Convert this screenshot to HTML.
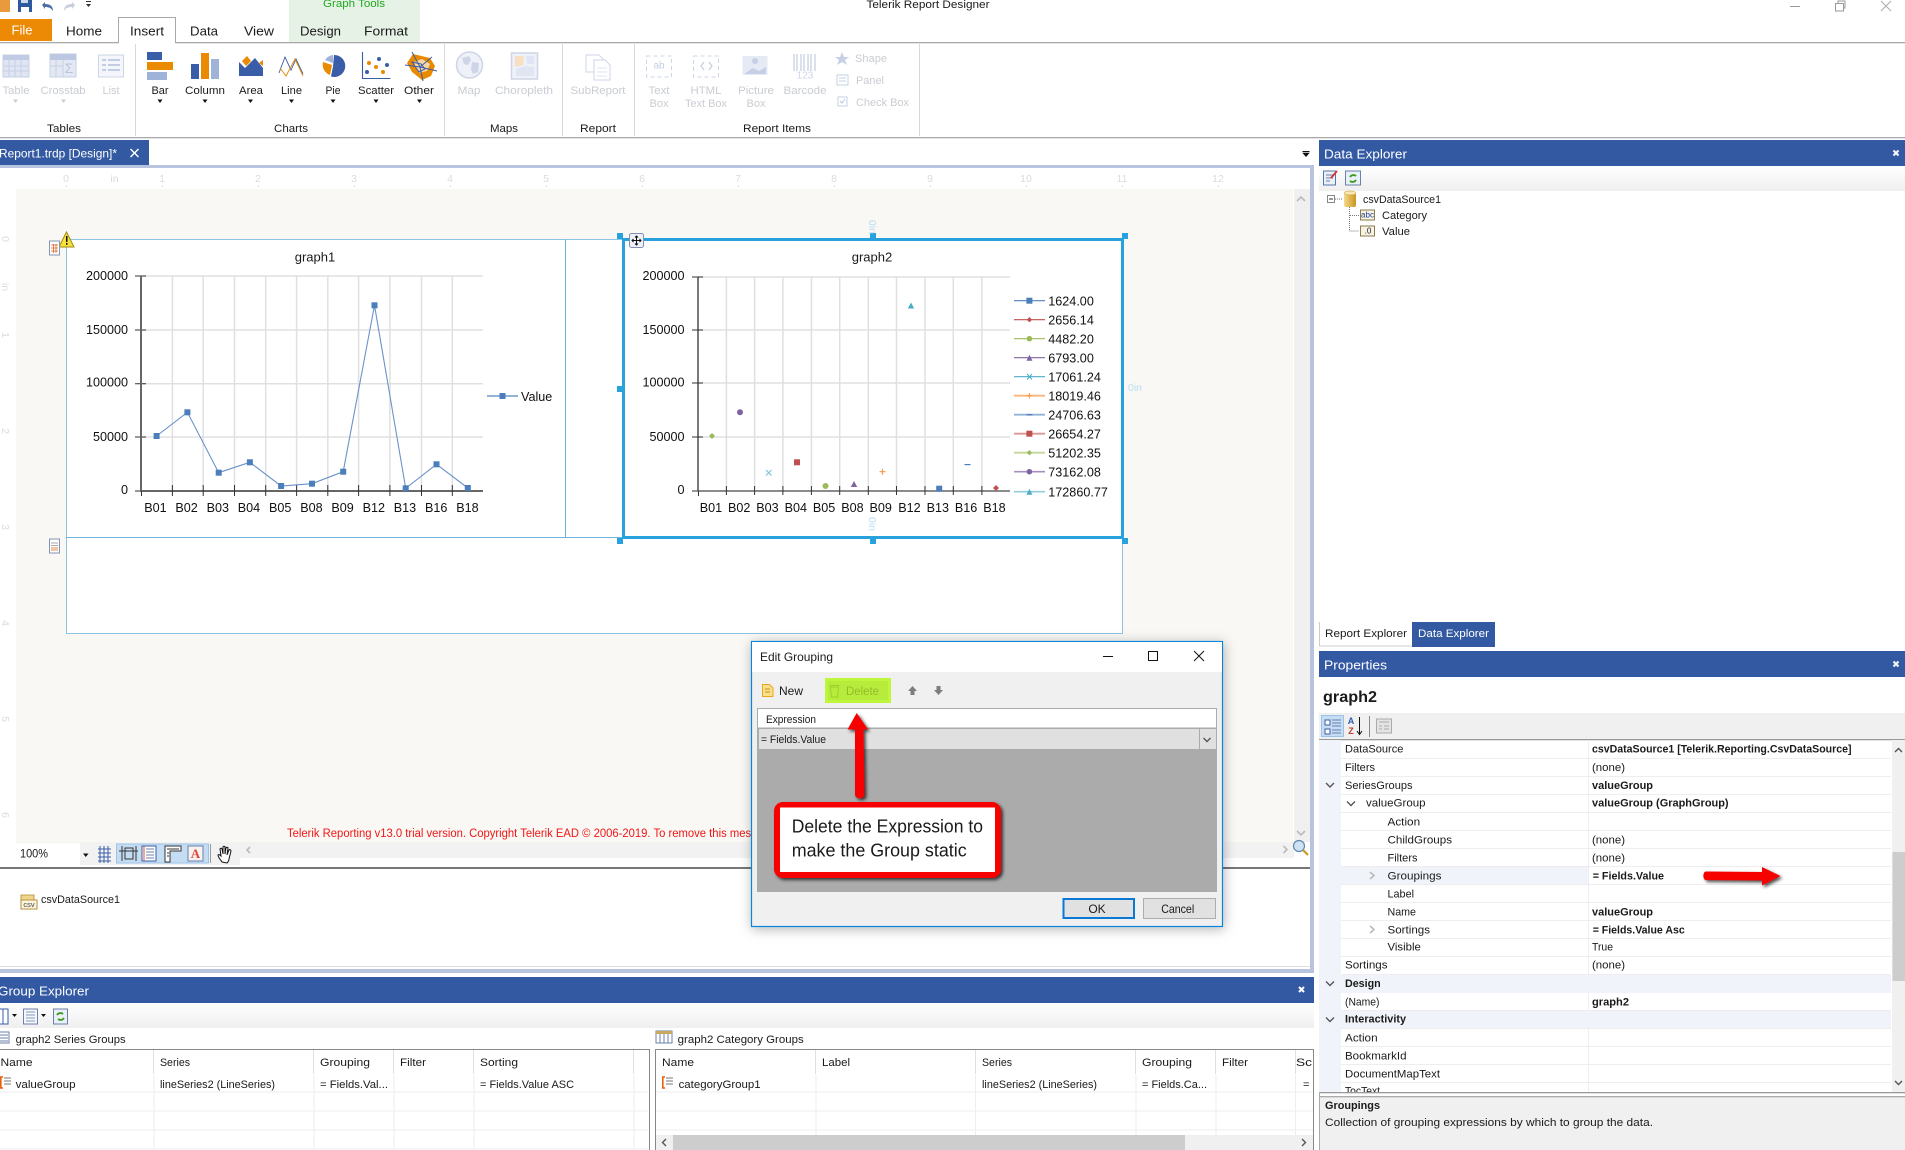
<!DOCTYPE html>
<html><head><meta charset="utf-8"><title>Telerik Report Designer</title>
<style>
html,body{margin:0;padding:0;background:#fff;width:1905px;height:1150px;overflow:hidden}
svg{display:block;position:absolute;left:0;top:0}
text{font-family:"Liberation Sans",Arial,sans-serif;font-size:11px;fill:#1a1a1a;dominant-baseline:central;transform:translateY(.9px)}
.n,.c.e{transform:none}
.g{fill:#c9ccd2}.m{text-anchor:middle}.b{font-weight:bold}.w{fill:#fff}
.r{fill:#dcdcd6;font-size:10.5px}
.c{font-size:12.6px;fill:#111}.e{text-anchor:end}
.gl{stroke:#e0e0e0;stroke-width:1.5;fill:none}
.ax{stroke:#666;stroke-width:2;fill:none}.tk{stroke:#333;stroke-width:1;fill:none}
.pl{stroke:#eee;stroke-width:1}
.chev{fill:none;stroke:#555;stroke-width:1.4}
.chg{fill:none;stroke:#bbb;stroke-width:1.6}
.gico{fill:none;stroke:#cdd5e6;stroke-width:1.2}
</style></head><body>
<svg width="1905" height="1150" viewBox="0 0 1905 1150" xmlns="http://www.w3.org/2000/svg">
<defs>
<filter id="ds" x="-10%" y="-10%" width="120%" height="120%"><feDropShadow dx="1" dy="2" stdDeviation="6" flood-color="#000" flood-opacity=".3"/></filter>
<filter id="ds2" x="-20%" y="-20%" width="140%" height="140%"><feDropShadow dx="2" dy="2" stdDeviation="1.5" flood-color="#000" flood-opacity=".7"/></filter>
<linearGradient id="tb" x1="0" y1="0" x2="0" y2="1"><stop offset="0" stop-color="#fff"/><stop offset="1" stop-color="#efefef"/></linearGradient>
<linearGradient id="cy" x1="0" y1="0" x2="1" y2="0"><stop offset="0" stop-color="#f7d98c"/><stop offset="1" stop-color="#c99422"/></linearGradient>
</defs>
<rect width="1905" height="1150" fill="#fff"/>

<!-- title bar -->
<rect x="0" y="0" width="10" height="12" fill="#e89a3c"/>
<path d="M18 0h14v12h-14z" fill="#2d5a9e"/><rect x="21" y="7" width="8" height="5" fill="#fff"/><rect x="21" y="0" width="7" height="3" fill="#cfd8ea"/>
<path d="M42 5l3-3v2c5 0 8 2 8 7-2-3-4-4-8-4v2z" fill="#4a6ea8"/>
<path d="M75 5l-3-3v2c-5 0-8 2-8 7 2-3 4-4 8-4v2z" fill="#c8d0de"/>
<rect x="86" y="1" width="5" height="1" fill="#333"/><path d="M86 4h5l-2.500 3z" fill="#333"/>
<text x="928" y="4" class="m" textLength="123" lengthAdjust="spacingAndGlyphs" font-size="11.500">Telerik Report Designer</text>
<rect x="1790" y="6" width="10" height="1" fill="#999"/>
<path d="M1835.500 3.500h8v7.500h-8zM1838 3.500v-2.500h7v7h-2" fill="none" stroke="#999"/>
<path d="M1881 1l10 10M1891 1l-10 10" stroke="#aaa" fill="none"/>

<!-- tabs -->
<rect x="289" y="0" width="131" height="43" fill="#e6f2e6"/>
<text x="354" y="3" class="m" style="fill:#1fa81f" textLength="62" lengthAdjust="spacingAndGlyphs">Graph Tools</text>
<rect x="0" y="42" width="1905" height="1.300" fill="#a9a9a9"/>
<rect x="0" y="19" width="52" height="22" fill="#ec8a06"/>
<text x="22" y="29" class="m w" style="font-size:13px">File</text>
<path d="M118.500 43V17.500h57V43" fill="#fff" stroke="#a9a9a9"/><rect x="119" y="41" width="56" height="3" fill="#fff"/>
<g style="font-size:13px">
<text x="66" y="31" class="n" textLength="36" lengthAdjust="spacingAndGlyphs" style="font-size:13px">Home</text>
<text x="130" y="31" class="n" textLength="34" lengthAdjust="spacingAndGlyphs" style="font-size:13px">Insert</text>
<text x="190" y="31" class="n" textLength="28" lengthAdjust="spacingAndGlyphs" style="font-size:13px">Data</text>
<text x="244" y="31" class="n" textLength="30" lengthAdjust="spacingAndGlyphs" style="font-size:13px">View</text>
<text x="300" y="31" class="n" textLength="41" lengthAdjust="spacingAndGlyphs" style="font-size:13px">Design</text>
<text x="364" y="31" class="n" textLength="44" lengthAdjust="spacingAndGlyphs" style="font-size:13px">Format</text>
</g>

<!-- ribbon -->
<rect x="0" y="137" width="1905" height="1.300" fill="#a9a9a9"/>
<g fill="#d8d8d8"><rect x="135" y="44" width="1" height="92"/><rect x="444" y="44" width="1" height="92"/><rect x="562" y="44" width="1" height="92"/><rect x="634" y="44" width="1" height="92"/><rect x="919" y="44" width="1" height="92"/></g>
<text x="64" y="128" class="m" textLength="34" lengthAdjust="spacingAndGlyphs">Tables</text>
<text x="291" y="128" class="m" textLength="34" lengthAdjust="spacingAndGlyphs">Charts</text>
<text x="504" y="128" class="m" textLength="28" lengthAdjust="spacingAndGlyphs">Maps</text>
<text x="598" y="128" class="m" textLength="36" lengthAdjust="spacingAndGlyphs">Report</text>
<text x="777" y="128" class="m" textLength="68" lengthAdjust="spacingAndGlyphs">Report Items</text>

<g class="ri">
<text x="16" y="90" class="m g" textLength="27" lengthAdjust="spacingAndGlyphs">Table</text>
<text x="63" y="90" class="m g" textLength="45" lengthAdjust="spacingAndGlyphs">Crosstab</text>
<text x="111" y="90" class="m g" textLength="17" lengthAdjust="spacingAndGlyphs">List</text>
<text x="160" y="90" class="m" textLength="17" lengthAdjust="spacingAndGlyphs">Bar</text>
<text x="205" y="90" class="m" textLength="40" lengthAdjust="spacingAndGlyphs">Column</text>
<text x="251" y="90" class="m" textLength="24" lengthAdjust="spacingAndGlyphs">Area</text>
<text x="291.500" y="90" class="m" textLength="21" lengthAdjust="spacingAndGlyphs">Line</text>
<text x="333" y="90" class="m" textLength="15" lengthAdjust="spacingAndGlyphs">Pie</text>
<text x="376" y="90" class="m" textLength="36" lengthAdjust="spacingAndGlyphs">Scatter</text>
<text x="419" y="90" class="m" textLength="30" lengthAdjust="spacingAndGlyphs">Other</text>
<text x="469" y="90" class="m g" textLength="23" lengthAdjust="spacingAndGlyphs">Map</text>
<text x="524" y="90" class="m g" textLength="58" lengthAdjust="spacingAndGlyphs">Choropleth</text>
<text x="598" y="90" class="m g" textLength="55" lengthAdjust="spacingAndGlyphs">SubReport</text>
<text x="659" y="90" class="m g" textLength="21" lengthAdjust="spacingAndGlyphs">Text</text>
<text x="659" y="103" class="m g" textLength="19" lengthAdjust="spacingAndGlyphs">Box</text>
<text x="706" y="90" class="m g" textLength="31" lengthAdjust="spacingAndGlyphs">HTML</text>
<text x="706" y="103" class="m g" textLength="42" lengthAdjust="spacingAndGlyphs">Text Box</text>
<text x="756" y="90" class="m g" textLength="36" lengthAdjust="spacingAndGlyphs">Picture</text>
<text x="756" y="103" class="m g" textLength="19" lengthAdjust="spacingAndGlyphs">Box</text>
<text x="805" y="90" class="m g" textLength="43" lengthAdjust="spacingAndGlyphs">Barcode</text>
<text x="855" y="58" class="g" textLength="32" lengthAdjust="spacingAndGlyphs">Shape</text>
<text x="856" y="80" class="g" textLength="28" lengthAdjust="spacingAndGlyphs">Panel</text>
<text x="856" y="102" class="g" textLength="53" lengthAdjust="spacingAndGlyphs">Check Box</text>
</g>
<g fill="#111"><path d="M157.500 99.500h5l-2.500 3.500z"/><path d="M202.500 99.500h5l-2.500 3.500z"/><path d="M248 99.500h5l-2.500 3.500z"/><path d="M289 99.500h5l-2.500 3.500z"/><path d="M330.500 99.500h5l-2.500 3.500z"/><path d="M373.500 99.500h5l-2.500 3.500z"/><path d="M417 99.500h5l-2.500 3.500z"/></g>
<g fill="#ccc"><path d="M13 99.500h5l-2.500 3.500z"/><path d="M61 99.500h5l-2.500 3.500z"/></g>

<!-- disabled table icons -->
<g>
<rect x="3" y="55" width="26" height="22" fill="#dfe5f2" stroke="#c6d0e6"/><rect x="3" y="55" width="26" height="5" fill="#c0cce4"/>
<path d="M3 66h26M3 71h26M9 60v17M15 60v17M21 60v17" stroke="#c6d0e6" fill="none"/>
<rect x="50" y="54" width="26" height="23" fill="#e4e8f3" stroke="#c6d0e6"/><rect x="50" y="54" width="26" height="6" fill="#bcc8e2"/><path d="M50 66h13M56 60v17M63 60v17" stroke="#c6d0e6" fill="none"/>
<text x="69" y="68" class="m n" style="fill:#b9c5df;font-size:14px">Σ</text>
<rect x="98.500" y="55" width="25" height="22" fill="#f4f6fb" stroke="#cdd5e6"/><path d="M102 60h4M102 65h4M102 70h4M108 60h12M108 65h12M108 70h12" stroke="#c2cde4" stroke-width="2"/>
</g>

<!-- chart icons -->
<rect x="147" y="52" width="15" height="8" fill="#3a5da8"/><rect x="147" y="62" width="26" height="8" fill="#ea8a00"/><rect x="147" y="72" width="20" height="8" fill="#9fb2d8"/>
<rect x="191" y="64" width="8" height="15" fill="#3a5da8"/><rect x="201" y="53" width="8" height="26" fill="#ea8a00"/><rect x="211" y="59" width="8" height="20" fill="#9fb2d8"/>
<path d="M242 61l5-5 4 5-5 5z" fill="#ea8a00"/><path d="M259 63l4-3v6z" fill="#ea8a00"/>
<path d="M239 76V62l6 6 10-10 8 10v8z" fill="#3a5da8"/>
<path d="M279 73l6-16 6 13 5-11 7 15" fill="none" stroke="#3a5da8" stroke-width=".9"/>
<path d="M280 68l6 8 9-17 8 17" fill="none" stroke="#ea8a00" stroke-width=".9"/>
<path d="M334 55a11 11 0 1 1 -3 21.500l2-10z" fill="#3a5da8"/>
<path d="M332 65l-9 -3a11 11 0 0 0 7 13z" fill="#ea8a00"/>
<path d="M333 55v8l-8-3a11 11 0 0 1 8-5z" fill="#9fb2d8"/>
<path d="M362.500 52v26.500h28" fill="none" stroke="#3a5da8" stroke-width="1.100"/>
<g fill="#ea8a00"><circle cx="369" cy="63" r="2"/><circle cx="376" cy="67" r="2"/><circle cx="383" cy="72" r="2"/></g><g fill="#3a5da8"><circle cx="379" cy="59" r="2"/><circle cx="387" cy="65" r="2"/><circle cx="367" cy="72" r="2"/></g>
<path d="M413 54l17 4 5 8-4 10-9 4-10-8-5-9z" fill="#ea8a00"/><path d="M414 62l8-3 8 5-3 7-8 2-3-5z" fill="#f6d8a6"/>
<path d="M412 52l8 15M420 67l12-10M420 67l17 4M420 67l3 14M420 67l-15-2" stroke="#3a5da8" fill="none" stroke-width="1"/><path d="M412 62l9 2 4 5-6 3z" fill="none" stroke="#3a5da8"/>

<!-- map & others (disabled) -->
<circle cx="469.500" cy="65" r="13" fill="#eef1f8" stroke="#cdd5e6" stroke-width="1.500"/><path d="M462 58l7-2 2 4-3 5-4-1zM472 62l7 1-1 9-5 2-2-5z" fill="#cdd5e6"/>
<rect x="511.500" y="53" width="26" height="26" fill="#eef1f8" stroke="#cdd5e6" stroke-width="1.500"/><path d="M515 56h9l-1 9-8 2z" fill="#f8dfc0"/><path d="M526 56h8v8h-7zM516 69l9-3 9 1v9h-18z" fill="#dfe5f2"/>
<path d="M586 55h13l6 6v11h-19z" fill="#fff" stroke="#cdd5e6"/><path d="M594 60h11l5 5v15h-16z" fill="#fff" stroke="#cdd5e6"/><path d="M597 68h10M597 72h10M597 76h10" stroke="#dde3ef"/>
<rect x="646.500" y="56" width="25" height="21" fill="none" stroke="#cdd5e6" stroke-dasharray="4 3"/><text x="659" y="66" class="m n" style="fill:#c3cde3;font-size:10px">ab</text>
<rect x="693.500" y="56" width="25" height="21" fill="none" stroke="#cdd5e6" stroke-dasharray="4 3"/><path d="M704 62l-3 4 3 4M709 62l3 4-3 4" fill="none" stroke="#c3cde3" stroke-width="1.200"/>
<rect x="742.500" y="56" width="25" height="19" fill="#e5eaf5"/><circle cx="755" cy="61" r="3" fill="#c5d0e6"/><path d="M744 74l9-6 6 3 7-4v7z" fill="#c5d0e6"/>
<path d="M794 54v17M797 54v17M801 54v17M804 54v17M808 54v17M811 54v17M815 54v17" stroke="#cdd5e6" stroke-width="1.500"/><text x="805" y="76" class="m n" style="fill:#cdd5e6;font-size:10px">123</text>
<path d="M842 52l2 5h5l-4 3 2 5-5-3-5 3 2-5-4-3h5z" fill="#c6d0e6"/>
<rect x="837" y="75" width="11" height="10" fill="#fff" stroke="#c6d0e6"/><path d="M839 78h7M839 81h7" stroke="#c6d0e6"/>
<rect x="838" y="97" width="9" height="9" fill="#fff" stroke="#c6d0e6"/><path d="M840 101l2 2 3-4" stroke="#b7c4df" fill="none"/>

<!-- doc tab -->
<rect x="0" y="140" width="149" height="25" fill="#3359a3"/>
<text x="-1" y="152.500" class="w" textLength="118" lengthAdjust="spacingAndGlyphs" style="font-size:12px">Report1.trdp [Design]*</text>
<path d="M130.500 149l8 8M138.500 149l-8 8" stroke="#fff" stroke-width="1.400"/>
<rect x="0" y="165" width="1314" height="3" fill="#b8c4de"/>
<rect x="1310" y="165" width="4" height="807" fill="#b8c4de"/>
<rect x="1302.500" y="151" width="7" height="1.300" fill="#111"/><path d="M1302.500 153h7l-3.500 4z" fill="#111"/>

<!-- rulers -->
<text x="66" y="178" class="r m">0</text><text x="114.500" y="178" class="r m">in</text>
<text x="162" y="178" class="r m">1</text><text x="258" y="178" class="r m">2</text><text x="354" y="178" class="r m">3</text><text x="450" y="178" class="r m">4</text><text x="546" y="178" class="r m">5</text><text x="642" y="178" class="r m">6</text><text x="738" y="178" class="r m">7</text><text x="834" y="178" class="r m">8</text><text x="930" y="178" class="r m">9</text><text x="1026" y="178" class="r m">10</text><text x="1122" y="178" class="r m">11</text><text x="1218" y="178" class="r m">12</text>
<g stroke="#ddd"><path d="M66.500 185v2M162.500 185v2M258.500 185v2M354.500 185v2M450.500 185v2M546.500 185v2M642.500 185v2M738.500 185v2M834.500 185v2M930.500 185v2M1026.500 185v2M1122.500 185v2M1218.500 185v2"/></g>

<!-- canvas -->
<rect x="16" y="189" width="1277" height="653" fill="#f9f8f4"/>
<rect x="1294" y="189" width="16" height="653" fill="#f0f0f0"/>
<path d="M1297 201l4-4 4 4" class="chg"/><path d="M1297 831l4 4 4-4" class="chg"/>
<g transform="rotate(90 5 239)"><text x="5" y="239" class="r m n">0</text></g>
<g transform="rotate(90 5 287)"><text x="5" y="287" class="r m n">in</text></g>
<g transform="rotate(90 5 335)"><text x="5" y="335" class="r m n">1</text></g>
<g transform="rotate(90 5 431)"><text x="5" y="431" class="r m n">2</text></g>
<g transform="rotate(90 5 527)"><text x="5" y="527" class="r m n">3</text></g>
<g transform="rotate(90 5 623)"><text x="5" y="623" class="r m n">4</text></g>
<g transform="rotate(90 5 719)"><text x="5" y="719" class="r m n">5</text></g>
<g transform="rotate(90 5 815)"><text x="5" y="815" class="r m n">6</text></g>

<!-- report page -->
<rect x="66.500" y="239.500" width="1056" height="394" fill="#fff" stroke="#8cc4e4"/>
<path d="M66 537.500h1057M565.500 239v298" stroke="#6fb6de" fill="none"/>
<path d="M59 247h15l-7.500-15z" fill="#f6e23c" stroke="#a08a10"/><rect x="66" y="236" width="1.500" height="6" fill="#111"/><rect x="66" y="243" width="1.500" height="1.800" fill="#111"/>
<rect x="49.500" y="241" width="10" height="14" fill="#fff" stroke="#8295b5"/><path d="M51 245h7M51 248h7M51 251h7M53.500 244v9M56 244v9" stroke="#d9662c" stroke-width=".8"/>
<rect x="49.500" y="539" width="10" height="14" fill="#fff" stroke="#8295b5"/><path d="M51 543h7M51 545.500h7" stroke="#aaa"/><path d="M51 548h7M51 550h7" stroke="#e28a4c"/>

<!-- graph1 -->
<text x="315" y="257" class="m n" style="font-size:13px">graph1</text>
<g class="gl"><path d="M141 276H483M141 330H483M141 383.700H483M141 437H483"/><path d="M172.400 276V491M203.200 276V491M234.500 276V491M265.700 276V491M296.600 276V491M327.800 276V491M358.600 276V491M389.900 276V491M421.500 276V491M452.300 276V491"/></g>
<path d="M135 276h11M135 330h11M135 383.700h11M135 437h11M135 491h6" class="tk" stroke-width="1.200"/>
<path d="M141 276V491H483" class="ax"/>
<path d="M141.500 491v5M172.400 485v11M203.200 485v11M234.500 485v11M265.700 485v11M296.600 485v11M327.800 485v11M358.600 485v11M389.900 485v11M421.500 485v11M452.300 485v11" class="tk"/>
<g>
<text x="128" y="276" class="c e">200000</text><text x="128" y="330" class="c e">150000</text><text x="128" y="382.500" class="c e">100000</text><text x="128" y="437" class="c e">50000</text><text x="128" y="490" class="c e">0</text>
<text x="155.400" y="507" class="c m">B01</text><text x="186.600" y="507" class="c m">B02</text><text x="217.800" y="507" class="c m">B03</text><text x="249" y="507" class="c m">B04</text><text x="280.200" y="507" class="c m">B05</text><text x="311.400" y="507" class="c m">B08</text><text x="342.600" y="507" class="c m">B09</text><text x="373.800" y="507" class="c m">B12</text><text x="405" y="507" class="c m">B13</text><text x="436.200" y="507" class="c m">B16</text><text x="467.400" y="507" class="c m">B18</text>
</g>
<polyline points="156.600,436 187.400,412.300 218.700,472.700 249.900,462.300 281.100,486 312,483.700 343.200,471.700 374.500,305.300 405.700,488.300 436.500,464.300 467.800,488" fill="none" stroke="#6b92c9" stroke-width="1.100"/>
<g fill="#4b7ebb"><rect x="153.600" y="433" width="6" height="6"/><rect x="184.400" y="409.300" width="6" height="6"/><rect x="215.700" y="469.700" width="6" height="6"/><rect x="246.900" y="459.300" width="6" height="6"/><rect x="278.100" y="483" width="6" height="6"/><rect x="309" y="480.700" width="6" height="6"/><rect x="340.200" y="468.700" width="6" height="6"/><rect x="371.500" y="302.300" width="6" height="6"/><rect x="402.700" y="485.300" width="6" height="6"/><rect x="433.500" y="461.300" width="6" height="6"/><rect x="464.800" y="485" width="6" height="6"/></g>
<rect x="487" y="395" width="31" height="2" fill="#95b3d7"/><rect x="499.500" y="393" width="6" height="6" fill="#4b7ebb"/>
<text x="521" y="396" class="c">Value</text>

<!-- graph2 -->
<rect x="623.500" y="239.500" width="499" height="299" fill="#fff"/>
<text x="872" y="257" class="m n" style="font-size:13px">graph2</text>
<g class="gl"><path d="M698 277H1010M698 330H1010M698 383H1010M698 437H1010"/><path d="M726.400 277V491M754.600 277V491M782.900 277V491M811.400 277V491M839.700 277V491M868.300 277V491M896.500 277V491M925 277V491M953.300 277V491M981.900 277V491"/></g>
<path d="M692 277h11M692 330h11M692 383h11M692 437h11M692 491h6" class="tk" stroke-width="1.200"/>
<path d="M698 277V491" stroke="#333" stroke-width="1.300" fill="none"/><path d="M698 491H1010" stroke="#666" stroke-width="1.600" fill="none"/>
<path d="M698.500 491v5M726.400 486v9M754.600 486v9M782.900 486v9M811.400 486v9M839.700 486v9M868.300 486v9M896.500 486v9M925 486v9M953.300 486v9M981.900 486v9" class="tk"/>
<text x="684.500" y="276" class="c e">200000</text><text x="684.500" y="330" class="c e">150000</text><text x="684.500" y="382.500" class="c e">100000</text><text x="684.500" y="437" class="c e">50000</text><text x="684.500" y="490" class="c e">0</text>
<text x="710.900" y="507" class="c m">B01</text><text x="739.200" y="507" class="c m">B02</text><text x="767.500" y="507" class="c m">B03</text><text x="795.800" y="507" class="c m">B04</text><text x="824.100" y="507" class="c m">B05</text><text x="852.400" y="507" class="c m">B08</text><text x="880.700" y="507" class="c m">B09</text><text x="909.500" y="507" class="c m">B12</text><text x="937.800" y="507" class="c m">B13</text><text x="966.100" y="507" class="c m">B16</text><text x="994.400" y="507" class="c m">B18</text>
<!-- points -->
<path d="M712 433l3 3-3 3-3-3z" fill="#9bbb59"/>
<circle cx="740" cy="412.300" r="3" fill="#8064a2"/>
<path d="M766 470l5.500 5.500M771.500 470l-5.500 5.500" stroke="#7fc4d8" stroke-width="1.200"/>
<rect x="794" y="459.300" width="6" height="6" fill="#c0504d"/>
<circle cx="825.500" cy="486" r="3" fill="#9bbb59"/>
<path d="M854 481l3.200 6h-6.400z" fill="#8064a2"/>
<path d="M879.500 471.700h6M882.500 468.700v6" stroke="#f79646" stroke-width="1.100"/>
<path d="M911 302.500l3.200 6h-6.400z" fill="#4bacc6"/>
<rect x="936.200" y="485.700" width="6" height="6" fill="#4b7ebb"/>
<rect x="964.500" y="464" width="6" height="1.200" fill="#4b7ebb"/>
<path d="M996 485l3 3-3 3-3-3z" fill="#c0504d"/>
<!-- legend -->
<g stroke-width="1.200" fill="none">
<path d="M1014 300.700h31" stroke="#4f81bd"/><path d="M1014 319.700h31" stroke="#c0504d"/><path d="M1014 338.700h31" stroke="#9bbb59"/><path d="M1014 357.700h31" stroke="#8064a2"/><path d="M1014 376.700h31" stroke="#4bacc6"/><path d="M1014 395.700h31" stroke="#f9b57a" stroke-width="1.800"/><path d="M1014 414.700h31" stroke="#95b3d7" stroke-width="1.800"/><path d="M1014 433.700h31" stroke="#d99694" stroke-width="1.800"/><path d="M1014 452.700h31" stroke="#c3d69b" stroke-width="1.800"/><path d="M1014 471.700h31" stroke="#a58fc0" stroke-width="1.600"/><path d="M1014 491.700h31" stroke="#93cddd" stroke-width="1.600"/>
</g>
<rect x="1026.400" y="297.700" width="6" height="6" fill="#4b7ebb"/>
<path d="M1029.400 317l2.600 2.700-2.600 2.700-2.600-2.700z" fill="#c0504d"/>
<circle cx="1029.400" cy="338.700" r="2.800" fill="#9bbb59"/>
<path d="M1029.400 354.700l3 6h-6z" fill="#8064a2"/>
<path d="M1027 374l5 5.500M1032 374l-5 5.500" stroke="#4bacc6"/>
<path d="M1029.400 393v5.500M1026.500 395.700h6" stroke="#f79646"/>
<rect x="1026.500" y="414" width="6" height="1.400" fill="#4f81bd"/>
<rect x="1026.400" y="430.700" width="6" height="6" fill="#c0504d"/>
<path d="M1029.400 450l2.600 2.700-2.600 2.700-2.600-2.700z" fill="#9bbb59"/>
<circle cx="1029.400" cy="471.700" r="2.800" fill="#8064a2"/>
<path d="M1029.400 488.700l3 6h-6z" fill="#4bacc6"/>
<text x="1048.300" y="300.700" class="c">1624.00</text><text x="1048.300" y="319.700" class="c">2656.14</text><text x="1048.300" y="338.700" class="c">4482.20</text><text x="1048.300" y="357.700" class="c">6793.00</text><text x="1048.300" y="376.700" class="c">17061.24</text><text x="1048.300" y="395.700" class="c">18019.46</text><text x="1048.300" y="414.700" class="c">24706.63</text><text x="1048.300" y="433.700" class="c">26654.27</text><text x="1048.300" y="452.700" class="c">51202.35</text><text x="1048.300" y="471.700" class="c">73162.08</text><text x="1048.300" y="491.700" class="c">172860.77</text>
<!-- selection -->
<rect x="623.500" y="239.500" width="499" height="298" fill="none" stroke="#27a2dc" stroke-width="3"/>
<g fill="#27a2dc"><rect x="617" y="233" width="6" height="6"/><rect x="1122" y="233" width="6" height="6"/><rect x="617" y="386" width="6" height="6"/><rect x="870" y="233" width="6" height="6"/><rect x="617" y="538" width="6" height="6"/><rect x="870" y="538" width="6" height="6"/><rect x="1122" y="538" width="6" height="6"/></g>
<rect x="629.500" y="233.500" width="14" height="14" rx="2" fill="#eef1f8" stroke="#8090b0"/>
<path d="M636.500 236v9M632 240.500h9M635 237.500l1.500-1.500 1.500 1.500M635 243.500l1.500 1.500 1.500-1.500M633.500 239l-1.500 1.500 1.500 1.500M639.500 239l1.500 1.500-1.500 1.500" stroke="#111" fill="none"/>
<g style="fill:#b8dcf0">
<g transform="rotate(90 872 227)"><text x="872" y="227" class="m n" style="fill:#b8dcf0;font-size:10.500px">0in</text></g>
<g transform="rotate(90 872 524)"><text x="872" y="524" class="m n" style="fill:#b8dcf0;font-size:10.500px">0in</text></g>
<text x="1128" y="387" style="fill:#b8dcf0;font-size:10.500px">0in</text>
</g>

<!-- red trial text -->
<text x="287" y="834" class="n" style="fill:#f01616;font-size:11.500px" textLength="476" lengthAdjust="spacingAndGlyphs">Telerik Reporting v13.0 trial version. Copyright Telerik EAD © 2006-2019. To remove this messa</text>

<!-- canvas bottom toolbar -->
<rect x="0" y="842" width="1310" height="25" fill="#fff"/>
<rect x="0" y="842" width="16" height="25" fill="#fff"/>
<rect x="16" y="842" width="1278" height="23" fill="#f2f2f2"/>
<rect x="240" y="858" width="1054" height="7" fill="#fff"/>
<rect x="16" y="843" width="64" height="22" fill="#fff"/>
<text x="20" y="853.500" class="n" textLength="28" lengthAdjust="spacingAndGlyphs" style="font-size:12px">100%</text>
<path d="M83 853.500h5.500l-2.700 3.500z" fill="#111"/>
<path d="M98 849h13M98 853h13M98 857h13M98 861h13M100 846v17M104 846v17M108 846v17" stroke="#3a5da8" fill="none"/>
<rect x="116.500" y="844" width="92" height="19" fill="#c5ddf3" stroke="#9cc3e6"/>
<path d="M125 848h8v11h-8zM119 851h19M122 846v15M136 846v15" fill="none" stroke="#333"/>
<rect x="142" y="846" width="14" height="15" fill="#fff" stroke="#3a5da8"/><path d="M146 849h8M146 852h8M146 855h8M146 858h8" stroke="#6b80ad"/><path d="M144 846v15" stroke="#d9532c"/>
<path d="M165 846h16v5h-11v11h-5z" fill="#fff" stroke="#333"/><path d="M167 849h12M167 853h2M167 856h2" stroke="#333"/>
<rect x="188" y="846" width="15" height="15" fill="#f7f2ee" stroke="#6b80ad"/><text x="195.500" y="853.500" class="m b n" style="fill:#d9483c;font-size:13px;font-family:'Liberation Serif',serif">A</text>
<rect x="210" y="844" width="1" height="19" fill="#999"/>
<path d="M222 862c-2-3-4-5-4-7 1-1 2 0 3 1l-1-7c0-1 2-1 2 0l1 5v-7c0-1 2-1 2 0v7l1-6c0-1 2-1 2 0l-1 7 2-5c1-1 2 0 2 1l-2 8c0 2-1 3-2 4z" fill="#fff" stroke="#111"/>
<path d="M250 847l-3 3 3 3" class="chg"/><path d="M1283.500 846l3.500 3.500-3.500 3.500" class="chg"/>
<circle cx="1299" cy="846" r="5.500" fill="#cfe2f5" stroke="#5e88b0" stroke-width="1.200"/><path d="M1303 850l5 5" stroke="#c89a2c" stroke-width="2.200"/>
<rect x="0" y="867" width="1310" height="2" fill="#777"/>

<!-- data source tray -->
<path d="M21 895h13v5h3v9h-16z" fill="#f1d58c" stroke="#b08b30" stroke-width=".8"/><rect x="21" y="900" width="16" height="9" fill="#fbf4dd" stroke="#a98428" stroke-width=".8"/><text x="29" y="904.500" class="m n" style="font-size:7.500px;fill:#444">csv</text>
<text x="41" y="899" textLength="79" lengthAdjust="spacingAndGlyphs">csvDataSource1</text>
<rect x="0" y="966" width="1310" height="1" fill="#dedede"/>
<rect x="0" y="969" width="1314" height="4" fill="#b8c4de"/>

<!-- Group explorer -->
<rect x="0" y="977" width="1314" height="26" fill="#3359a3"/>
<text x="-2" y="990" class="w" textLength="91" lengthAdjust="spacingAndGlyphs" style="font-size:13px">Group Explorer</text>
<path d="M1299 987l5 5M1304 987l-5 5" stroke="#fff" stroke-width="2"/>
<rect x="0" y="1003" width="1314" height="25" fill="url(#tb)"/>
<rect x="-3" y="1009" width="11" height="15" fill="#fff" stroke="#3a5da8"/><path d="M3 1009v15" stroke="#3a5da8"/>
<path d="M12 1014h5l-2.500 3z" fill="#111"/>
<rect x="23.500" y="1009" width="14" height="15" fill="#f4f7fb" stroke="#6b80ad"/><path d="M26 1012h9M26 1015h9M26 1018h9M26 1021h9" stroke="#8899bb"/>
<path d="M41 1014h5l-2.500 3z" fill="#111"/>
<rect x="53.500" y="1009" width="14" height="15" fill="#e8f0f8" stroke="#6b80ad"/><path d="M57 1015a4 4 0 0 1 6-1M64 1018a4 4 0 0 1-6 1" stroke="#3e9a1c" stroke-width="1.800" fill="none"/>

<text x="15.600" y="1039" textLength="110" lengthAdjust="spacingAndGlyphs">graph2 Series Groups</text>
<rect x="-2" y="1032" width="11" height="11" fill="#fff" stroke="#6b80ad"/><path d="M0 1035h8M0 1038h8M0 1041h8" stroke="#6b80ad"/>
<path d="M0 1049.500H649.500V1150" stroke="#888" fill="none"/>
<g class="pl"><path d="M0 1092H648M0 1111H648M0 1130H648M0 1149H648M154 1075V1150M314 1075V1150M394 1075V1150M474 1075V1150M634 1075V1150"/></g>
<path d="M153.500 1050v24M313.500 1050v24M393.500 1050v24M473.500 1050v24M633.500 1050v24" stroke="#e0e0e0"/>
<text x="0.500" y="1062" textLength="32" lengthAdjust="spacingAndGlyphs">Name</text><text x="160" y="1062" textLength="30" lengthAdjust="spacingAndGlyphs">Series</text><text x="320" y="1062" textLength="50" lengthAdjust="spacingAndGlyphs">Grouping</text><text x="400" y="1062" textLength="26" lengthAdjust="spacingAndGlyphs">Filter</text><text x="480" y="1062" textLength="38" lengthAdjust="spacingAndGlyphs">Sorting</text>
<path d="M3 1077H0.800V1088H3" stroke="#e8600c" stroke-width="1.600" fill="none"/><path d="M4 1078h7M4 1081h7M4 1084h7" stroke="#777"/>
<text x="15.600" y="1084" textLength="60" lengthAdjust="spacingAndGlyphs">valueGroup</text><text x="160" y="1084" textLength="115" lengthAdjust="spacingAndGlyphs">lineSeries2 (LineSeries)</text><text x="320" y="1084" textLength="68" lengthAdjust="spacingAndGlyphs">= Fields.Val...</text><text x="480" y="1084" textLength="94" lengthAdjust="spacingAndGlyphs">= Fields.Value ASC</text>

<rect x="656" y="1031" width="16" height="12" fill="#fff" stroke="#6b80ad"/><rect x="656" y="1031" width="16" height="3" fill="#c8a860"/><path d="M660 1034v9M664 1034v9M668 1034v9" stroke="#6b80ad"/>
<text x="677.700" y="1039" textLength="126" lengthAdjust="spacingAndGlyphs">graph2 Category Groups</text>
<path d="M655.500 1150V1049.500H1313.500V1150" stroke="#888" fill="none"/>
<g class="pl"><path d="M656 1092H1313M656 1111H1313M656 1130H1313M816 1075V1135M975.500 1075V1135M1136 1075V1135M1216 1075V1135M1295.500 1075V1135"/></g>
<path d="M815.500 1050v24M975.500 1050v24M1135.500 1050v24M1215.500 1050v24M1295.500 1050v24" stroke="#e0e0e0"/>
<text x="662" y="1062" textLength="32" lengthAdjust="spacingAndGlyphs">Name</text><text x="822" y="1062" textLength="28" lengthAdjust="spacingAndGlyphs">Label</text><text x="982" y="1062" textLength="30" lengthAdjust="spacingAndGlyphs">Series</text><text x="1142" y="1062" textLength="50" lengthAdjust="spacingAndGlyphs">Grouping</text><text x="1222" y="1062" textLength="26" lengthAdjust="spacingAndGlyphs">Filter</text><text x="1296" y="1062" textLength="16" lengthAdjust="spacingAndGlyphs">Sc</text>
<path d="M665 1077H662.800V1088H665" stroke="#e8600c" stroke-width="1.600" fill="none"/><path d="M666 1078h7M666 1081h7M666 1084h7" stroke="#777"/>
<text x="678.600" y="1084" textLength="82" lengthAdjust="spacingAndGlyphs">categoryGroup1</text><text x="982" y="1084" textLength="115" lengthAdjust="spacingAndGlyphs">lineSeries2 (LineSeries)</text><text x="1142" y="1084" textLength="65" lengthAdjust="spacingAndGlyphs">= Fields.Ca...</text><text x="1303" y="1084">=</text>
<rect x="656" y="1135" width="657" height="15" fill="#f0f0f0"/><rect x="673" y="1135" width="512" height="15" fill="#cdcdcd"/>
<path d="M666 1139l-3.500 3.500 3.500 3.500M1302 1139l3.500 3.500-3.500 3.500" class="chev" stroke="#666"/>

<!-- Data explorer -->
<rect x="1319" y="140" width="586" height="26" fill="#3359a3"/>
<text x="1324" y="153" class="w" textLength="83" lengthAdjust="spacingAndGlyphs" style="font-size:13px">Data Explorer</text>
<path d="M1893.500 150.500l5 5M1898.500 150.500l-5 5" stroke="#fff" stroke-width="2"/>
<rect x="1319" y="166" width="586" height="25" fill="url(#tb)"/>
<rect x="1323.500" y="171" width="12" height="14" fill="#eaf0f8" stroke="#5577aa"/><path d="M1326 175h7M1326 178h7M1326 181h4" stroke="#6b80ad"/><path d="M1331 178l6-7" stroke="#d9332c" stroke-width="1.800"/>
<rect x="1345.500" y="171" width="15" height="14" fill="#e8f0f8" stroke="#6b80ad"/><path d="M1350 177a4 4 0 0 1 6-1M1356 180a4 4 0 0 1-6 1" stroke="#3e9a1c" stroke-width="1.800" fill="none"/>
<rect x="1327.500" y="195.500" width="7" height="7" fill="#fff" stroke="#888"/><path d="M1329 199h4" stroke="#333"/>
<path d="M1335 199h8M1349.500 207v24h10M1350 215.500h10" stroke="#777" stroke-dasharray="1 1" fill="none"/>
<rect x="1344" y="193" width="12" height="14" rx="2" fill="url(#cy)"/><ellipse cx="1350" cy="193" rx="6" ry="2" fill="#f9e7b5" stroke="#c49a30" stroke-width=".5"/>
<text x="1363" y="199" textLength="78" lengthAdjust="spacingAndGlyphs">csvDataSource1</text>
<rect x="1360.500" y="210" width="14" height="10" fill="#f6f2e4" stroke="#8a7c4c"/><text x="1367.500" y="215" class="m n" style="font-size:8px;fill:#1f3f8f">abc</text>
<text x="1382" y="215" textLength="45" lengthAdjust="spacingAndGlyphs">Category</text>
<rect x="1360.500" y="226" width="14" height="10" fill="#f6f2e4" stroke="#8a7c4c"/><text x="1368" y="231" class="m n" style="font-size:8px">.0</text>
<text x="1382" y="231" textLength="28" lengthAdjust="spacingAndGlyphs">Value</text>

<!-- explorer tabs -->
<path d="M1319.500 622v24H1412" stroke="#ccc" fill="none"/>
<text x="1325" y="633" textLength="82" lengthAdjust="spacingAndGlyphs">Report Explorer</text>
<rect x="1412" y="622" width="83" height="25" fill="#3359a3"/>
<text x="1418" y="633" class="w" textLength="71" lengthAdjust="spacingAndGlyphs">Data Explorer</text>

<!-- Properties -->
<rect x="1319" y="651" width="586" height="26" fill="#3359a3"/>
<text x="1324" y="664" class="w" textLength="63" lengthAdjust="spacingAndGlyphs" style="font-size:13px">Properties</text>
<path d="M1893.500 661.500l5 5M1898.500 661.500l-5 5" stroke="#fff" stroke-width="2"/>
<text x="1323" y="696.500" class="b" textLength="54" lengthAdjust="spacingAndGlyphs" style="font-size:16px">graph2</text>
<rect x="1319" y="713" width="586" height="26" fill="#f0f0f0"/>
<rect x="1321.500" y="715.500" width="22" height="21" fill="#c5ddf3" stroke="#9cc3e6"/>
<path d="M1325 720h5v5h-5zM1325 729h5v5h-5z" fill="#fff" stroke="#3a5da8"/><path d="M1332 720h9M1332 723h9M1332 726h9M1332 730h9M1332 733h9" stroke="#6b80ad"/>
<text x="1351" y="721" class="m n" style="font-size:9px;fill:#2d5fb0;font-weight:bold">A</text><text x="1351" y="731" class="m n" style="font-size:9px;fill:#c0392b;font-weight:bold">Z</text>
<path d="M1359.500 717v17M1357 731l2.500 3.500 2.500-3.500" stroke="#111" fill="none"/>
<rect x="1369" y="716" width="1" height="21" fill="#888"/>
<rect x="1376.500" y="719" width="15" height="14" fill="#e4e4e4" stroke="#aaa"/><path d="M1379 722h10M1379 726h3M1384 726h5M1379 729h3M1384 729h5" stroke="#aaa"/>
<rect x="1319" y="739" width="586" height="1.300" fill="#999"/>
<rect x="1319" y="740" width="22" height="352" fill="#f0f4fa"/>
<rect x="1341" y="866" width="247" height="19" fill="#f0f4fa"/>
<rect x="1319" y="975" width="572" height="18" fill="#f0f4fa"/>
<rect x="1319" y="1011" width="572" height="18" fill="#f0f4fa"/>
<g class="pl">
<path d="M1341 758.500H1891M1341 776.500H1891M1341 794.500H1891M1341 812.500H1891M1341 830.500H1891M1341 848.500H1891M1341 866.500H1891M1341 884.500H1891M1341 902.500H1891M1341 920.500H1891M1341 938.500H1891M1341 956.500H1891M1341 974.500H1891M1341 1010.500H1891M1341 1028.500H1891M1341 1046.500H1891M1341 1064.500H1891M1341 1082.500H1891"/>
<path d="M1588.500 740V974M1588.500 993V1010M1588.500 1029V1092"/>
</g>
<rect x="1892" y="740" width="13" height="352" fill="#f0f0f0"/><rect x="1892.500" y="852" width="12.500" height="129" fill="#cdcdcd"/>
<path d="M1895 752l3.500-3.500 3.500 3.500" class="chev"/><path d="M1895 1081l3.500 3.500 3.500-3.500" class="chev"/>
<path d="M1326 783l4 4 4-4M1347 801.500l4 4 4-4M1326 981.500l4 4 4-4M1326 1017.500l4 4 4-4" class="chev"/>
<path d="M1370 872l4 3.500-4 3.500M1370 926l4 3.500-4 3.500" class="chg"/>

<text x="1345" y="749.300" class="n" textLength="58.400" lengthAdjust="spacingAndGlyphs">DataSource</text>
<text x="1345" y="767" textLength="30" lengthAdjust="spacingAndGlyphs">Filters</text>
<text x="1345" y="785" textLength="67.500" lengthAdjust="spacingAndGlyphs">SeriesGroups</text>
<text x="1366" y="803.400" class="n" textLength="59.600" lengthAdjust="spacingAndGlyphs">valueGroup</text>
<text x="1387.500" y="821.400" textLength="32.600" lengthAdjust="spacingAndGlyphs">Action</text>
<text x="1387.500" y="839.600" textLength="64.500" lengthAdjust="spacingAndGlyphs">ChildGroups</text>
<text x="1387.500" y="857.600" textLength="30" lengthAdjust="spacingAndGlyphs">Filters</text>
<text x="1387.500" y="875.500" textLength="54" lengthAdjust="spacingAndGlyphs">Groupings</text>
<text x="1387.500" y="893.400" textLength="26.500" lengthAdjust="spacingAndGlyphs">Label</text>
<text x="1387.500" y="911.400" textLength="28.500" lengthAdjust="spacingAndGlyphs">Name</text>
<text x="1387.500" y="929.700" textLength="42.500" lengthAdjust="spacingAndGlyphs">Sortings</text>
<text x="1387.500" y="947.600" class="n" textLength="33.400" lengthAdjust="spacingAndGlyphs">Visible</text>
<text x="1345" y="965.500" class="n" textLength="42.500" lengthAdjust="spacingAndGlyphs">Sortings</text>
<text x="1345" y="983.800" class="b n" textLength="35.700" lengthAdjust="spacingAndGlyphs">Design</text>
<text x="1345" y="1001.700" textLength="34.500" lengthAdjust="spacingAndGlyphs">(Name)</text>
<text x="1345" y="1019.700" class="b n" textLength="61" lengthAdjust="spacingAndGlyphs">Interactivity</text>
<text x="1345" y="1037.600" textLength="32.600" lengthAdjust="spacingAndGlyphs">Action</text>
<text x="1345" y="1055.500" textLength="61.500" lengthAdjust="spacingAndGlyphs">BookmarkId</text>
<text x="1345" y="1073.400" textLength="95" lengthAdjust="spacingAndGlyphs">DocumentMapText</text>
<text x="1345" y="1090.700" textLength="35" lengthAdjust="spacingAndGlyphs">TocText</text>

<text x="1592" y="749.300" class="b n" textLength="259.500" lengthAdjust="spacingAndGlyphs">csvDataSource1 [Telerik.Reporting.CsvDataSource]</text>
<text x="1592" y="767" textLength="33" lengthAdjust="spacingAndGlyphs">(none)</text>
<text x="1592" y="785" class="b" textLength="61" lengthAdjust="spacingAndGlyphs">valueGroup</text>
<text x="1592" y="803.400" class="b n" textLength="136.600" lengthAdjust="spacingAndGlyphs">valueGroup (GraphGroup)</text>
<text x="1592" y="839.600" textLength="33" lengthAdjust="spacingAndGlyphs">(none)</text>
<text x="1592" y="857.600" textLength="33" lengthAdjust="spacingAndGlyphs">(none)</text>
<text x="1592.700" y="875.500" class="b" textLength="71.300" lengthAdjust="spacingAndGlyphs">= Fields.Value</text>
<text x="1592" y="911.400" class="b" textLength="61" lengthAdjust="spacingAndGlyphs">valueGroup</text>
<text x="1592.700" y="929.700" class="b" textLength="92" lengthAdjust="spacingAndGlyphs">= Fields.Value Asc</text>
<text x="1592" y="947.600" class="n" textLength="21" lengthAdjust="spacingAndGlyphs">True</text>
<text x="1592" y="965.500" class="n" textLength="33" lengthAdjust="spacingAndGlyphs">(none)</text>
<text x="1592" y="1001.700" class="b" textLength="37" lengthAdjust="spacingAndGlyphs">graph2</text>

<!-- prop arrow -->
<path d="M1706 871.500l56 0.500v-5l18.500 9-18.500 9.500v-5l-56-.5c-3.500 0-3.500-8.500 0-8.500z" fill="#f60000" filter="url(#ds2)"/>

<!-- help panel -->
<rect x="1319" y="1092" width="586" height="58" fill="#fff"/>
<rect x="1319" y="1092" width="586" height="1.300" fill="#999"/>
<rect x="1319" y="1096" width="586" height="54" fill="#f0f0f0"/>
<rect x="1319" y="1096" width="586" height="1.300" fill="#aaa"/>
<rect x="1319" y="1092" width="1" height="58" fill="#aaa"/>
<text x="1325" y="1106" class="b n" textLength="55" lengthAdjust="spacingAndGlyphs">Groupings</text>
<text x="1325" y="1123" class="n" textLength="328" lengthAdjust="spacingAndGlyphs">Collection of grouping expressions by which to group the data.</text>

<!-- dialog -->
<rect x="751.500" y="641.500" width="471" height="285" fill="#f0f0f0" stroke="#0a84d8" stroke-width="1.200" filter="url(#ds)"/>
<rect x="752" y="642" width="470" height="30" fill="#fff"/>
<text x="760" y="657" class="n" textLength="73" lengthAdjust="spacingAndGlyphs" style="font-size:12px">Edit Grouping</text>
<rect x="1103" y="656" width="10" height="1" fill="#111"/>
<rect x="1148.500" y="651.500" width="9" height="9" fill="none" stroke="#111"/>
<path d="M1194 651l10 10M1204 651l-10 10" stroke="#111" fill="none"/>
<path d="M762.500 684.500h7l3.500 3.500v8.500h-10.500z" fill="#fbe08c" stroke="#e8a81c"/><path d="M765 689h5M765 692h5" stroke="#c98a1a"/>
<text x="779" y="691" class="n" textLength="24" lengthAdjust="spacingAndGlyphs" style="font-size:12px">New</text>
<rect x="825" y="678" width="66" height="25" fill="#bef63c"/>
<rect x="828" y="681" width="60" height="19" fill="#b8ec3c"/>
<path d="M830.500 687h8l-1 10h-6zM829.500 685.500h10" fill="none" stroke="#9ccf2c"/>
<text x="846" y="691" class="n" textLength="33" lengthAdjust="spacingAndGlyphs" style="fill:#92bd28;font-size:12px">Delete</text>
<path d="M912.500 686l4.500 5h-2.500v4h-4v-4H908z" fill="#7d7d7d"/>
<path d="M938.500 695l4.500-5h-2.500v-4h-4v4H934z" fill="#7d7d7d"/>

<rect x="757" y="708" width="460" height="184" fill="#ababab"/>
<rect x="758" y="709" width="458" height="18.500" fill="#fff"/>
<text x="766" y="719" textLength="50" lengthAdjust="spacingAndGlyphs">Expression</text>
<rect x="759" y="729" width="457" height="20" fill="#e0e0e0"/>
<rect x="1199" y="729" width="1" height="20" fill="#ababab"/>
<path d="M1203.500 738l3.500 3.500 3.500-3.500" class="chev" stroke="#555"/>
<text x="761" y="740" class="n" textLength="65" lengthAdjust="spacingAndGlyphs">= Fields.Value</text>

<rect x="777" y="805" width="221" height="70" rx="6" fill="#fff" stroke="#f60000" stroke-width="6" filter="url(#ds2)"/>
<rect x="780" y="807.500" width="215" height="64.500" fill="#fff"/>
<text x="791.700" y="826" class="n" textLength="191.300" lengthAdjust="spacingAndGlyphs" style="font-size:18.500px">Delete the Expression to</text>
<text x="791.700" y="850" class="n" textLength="175" lengthAdjust="spacingAndGlyphs" style="font-size:18.500px">make the Group static</text>
<path d="M856.700 713l11.300 16.500h-4.500l1 65c0 5-9.500 5-9.500 0l0-65h-7.500z" fill="#f60000" filter="url(#ds2)"/>

<rect x="1063.500" y="899" width="70.500" height="19" fill="#e1e1e1" stroke="#0a78d4" stroke-width="2"/>
<text x="1097" y="909" class="m n" style="font-size:12px">OK</text>
<rect x="1143.500" y="898.500" width="72" height="20" fill="#e1e1e1" stroke="#adadad"/>
<text x="1177.700" y="909" class="m n" textLength="33" lengthAdjust="spacingAndGlyphs" style="font-size:12px">Cancel</text>
</svg>
</body></html>
